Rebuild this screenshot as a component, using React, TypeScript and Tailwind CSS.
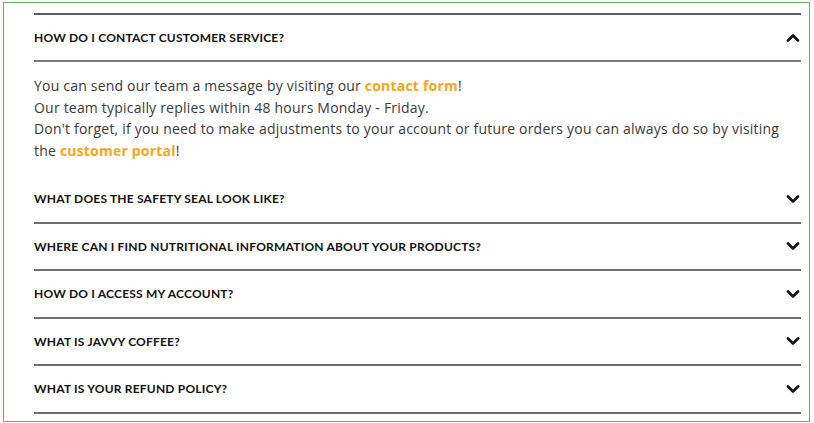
import React from "react";

const Chevron = ({ up = false }: { up?: boolean }) => (
  <svg width="14" height="9" viewBox="0 0 14 9" className="shrink-0">
    <polyline
      points={up ? "2,7.5 7,2.5 12,7.5" : "2,1.5 7,6.5 12,1.5"}
      fill="none"
      stroke="#121212"
      strokeWidth="2.6"
      strokeLinecap="round"
      strokeLinejoin="round"
    />
  </svg>
);

const questions = [
  "WHAT DOES THE SAFETY SEAL LOOK LIKE?",
  "WHERE CAN I FIND NUTRITIONAL INFORMATION ABOUT YOUR PRODUCTS?",
  "HOW DO I ACCESS MY ACCOUNT?",
  "WHAT IS JAVVY COFFEE?",
  "WHAT IS YOUR REFUND POLICY?",
];

export default function App() {
  return (
    <div className="w-[814px] h-[423px] bg-white pl-[3px] pt-[2px]" style={{ fontFamily: "Lato, 'Noto Sans', sans-serif" }}>
      <div className="w-[807px] h-[420px] border border-[#6aa96a] pl-[30px] pr-[8px] pt-[10px]">
        <div className="border-t-2 border-[#5c5c5c]">
          <div className="h-[47px] border-b-2 border-[#7a7a7a] flex items-center justify-between pr-[1px]">
            <span className="text-[12px] font-bold tracking-[0.2px] text-[#111]">HOW DO I CONTACT CUSTOMER SERVICE?</span>
            <Chevron up />
          </div>
          <div
            className="pt-[13px] pb-[14.5px] text-[14px] leading-[21.7px] tracking-[0.2px] text-[#3a3a3a]"
            style={{ fontFamily: "'Open Sans', sans-serif" }}
          >
            <p>
              You can send our team a message by visiting our{" "}
              <span className="font-bold text-[#f7a520]">contact form</span>!
            </p>
            <p>Our team typically replies within 48 hours Monday - Friday.</p>
            <p>
              Don't forget, if you need to make adjustments to your account or future orders you can always do so by visiting
              the <span className="font-bold text-[#f7a520]">customer portal</span>!
            </p>
          </div>
          {questions.map((q) => (
            <div key={q} className="h-[47.5px] border-b-2 border-[#6e6e6e] flex items-center justify-between pr-[1px]">
              <span className="text-[12px] font-bold tracking-[0.2px] text-[#111]">{q}</span>
              <Chevron />
            </div>
          ))}
        </div>
      </div>
    </div>
  );
}
